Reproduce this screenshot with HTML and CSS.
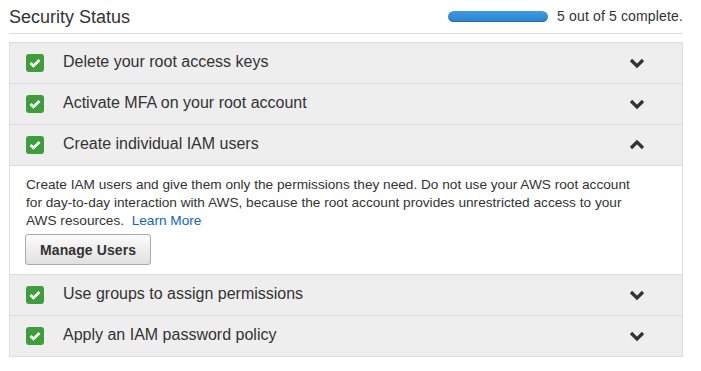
FILE: index.html
```html
<!DOCTYPE html>
<html lang="en">
<head>
    <meta charset="UTF-8">
    <title>Security Status</title>
    <link rel="stylesheet" href="styles.css">
</head>
<body>
    <div class="container">
        <div class="header">
            <h2 class="title">Security Status</h2>
            <div class="progress">
                <div class="bar"><div class="fill" style="width: 100%"></div></div>
                <span class="progress-text">5 out of 5 complete.</span>
            </div>
        </div>
        <div class="panel">
            <div class="row">
                <div class="row-head">
                    <span class="check"><svg width="12" height="10" viewBox="0 0 12 10"><polyline points="1.5,5 4.5,8 10.5,2" fill="none" stroke="#fff" stroke-width="2.6"/></svg></span>
                    <span class="label">Delete your root access keys</span>
                    <svg class="chevron" width="16" height="10" viewBox="0 0 16 10"><polyline points="2,2 8,8 14,2" fill="none" stroke="#333" stroke-width="3.2"/></svg>
                </div>
            </div>
            <div class="row">
                <div class="row-head">
                    <span class="check"><svg width="12" height="10" viewBox="0 0 12 10"><polyline points="1.5,5 4.5,8 10.5,2" fill="none" stroke="#fff" stroke-width="2.6"/></svg></span>
                    <span class="label">Activate MFA on your root account</span>
                    <svg class="chevron" width="16" height="10" viewBox="0 0 16 10"><polyline points="2,2 8,8 14,2" fill="none" stroke="#333" stroke-width="3.2"/></svg>
                </div>
            </div>
            <div class="row open">
                <div class="row-head">
                    <span class="check"><svg width="12" height="10" viewBox="0 0 12 10"><polyline points="1.5,5 4.5,8 10.5,2" fill="none" stroke="#fff" stroke-width="2.6"/></svg></span>
                    <span class="label">Create individual IAM users</span>
                    <svg class="chevron" width="16" height="10" viewBox="0 0 16 10"><polyline points="2,8 8,2 14,8" fill="none" stroke="#333" stroke-width="3.2"/></svg>
                </div>
                <div class="row-body">
                    <p class="desc">Create IAM users and give them only the permissions they need. Do not use your AWS root account for day-to-day interaction with AWS, because the root account provides unrestricted access to your AWS resources.&nbsp; <a href="#" class="link">Learn More</a></p>
                    <button class="button">Manage Users</button>
                </div>
            </div>
            <div class="row">
                <div class="row-head">
                    <span class="check"><svg width="12" height="10" viewBox="0 0 12 10"><polyline points="1.5,5 4.5,8 10.5,2" fill="none" stroke="#fff" stroke-width="2.6"/></svg></span>
                    <span class="label">Use groups to assign permissions</span>
                    <svg class="chevron" width="16" height="10" viewBox="0 0 16 10"><polyline points="2,2 8,8 14,2" fill="none" stroke="#333" stroke-width="3.2"/></svg>
                </div>
            </div>
            <div class="row">
                <div class="row-head">
                    <span class="check"><svg width="12" height="10" viewBox="0 0 12 10"><polyline points="1.5,5 4.5,8 10.5,2" fill="none" stroke="#fff" stroke-width="2.6"/></svg></span>
                    <span class="label">Apply an IAM password policy</span>
                    <svg class="chevron" width="16" height="10" viewBox="0 0 16 10"><polyline points="2,2 8,8 14,2" fill="none" stroke="#333" stroke-width="3.2"/></svg>
                </div>
            </div>
        </div>
    </div>
</body>
</html>
```

FILE: styles.css
```css
body {
    margin: 0;
    background-color: #fff;
    font-family: "Liberation Sans", Arial, sans-serif;
    color: #333;
}
.container {
    width: 674px;
    padding-left: 9px;
}
.header {
    display: flex;
    justify-content: space-between;
    align-items: center;
    height: 33px;
    border-bottom: 1px solid #ddd;
    margin-bottom: 8px;
}
.title {
    margin: 0;
    font-size: 18px;
    font-weight: normal;
    line-height: 22px;
    color: #333;
    padding-top: 1px;
}
.progress {
    display: flex;
    align-items: center;
    gap: 9px;
    padding-bottom: 1px;
}
.bar {
    width: 100px;
    height: 11px;
    border-radius: 6px;
    background-color: #ddd;
    overflow: hidden;
}
.fill {
    height: 100%;
    border-radius: 6px;
    background: linear-gradient(#3d9be0, #2b83cb);
    box-shadow: inset 0 -1px 0 #1f6fae;
}
.progress-text {
    font-size: 14px;
    letter-spacing: 0.15px;
    color: #333;
}
.panel {
    border: 1px solid #ddd;
    border-bottom: none;
}
.row {
    border-bottom: 1px solid #ddd;
}
.row-head {
    display: flex;
    align-items: center;
    height: 40px;
    padding: 0 37px 0 16px;
    background-color: #eee;
}
.row.open .row-head {
    border-bottom: 1px solid #ddd;
}
.check {
    display: flex;
    justify-content: center;
    align-items: center;
    width: 18px;
    height: 18px;
    border-radius: 3px;
    background-color: #3f9d3b;
    margin-right: 19px;
}
.label {
    flex: 1;
    font-size: 16px;
    color: #333;
    padding-bottom: 2px;
}
.row-body {
    background-color: #fff;
    padding: 9px 35px 9px 16px;
}
.desc {
    margin: 0 0 5px;
    font-size: 13.65px;
    line-height: 18px;
    padding-top: 1px;
}
.link {
    color: #1166bb;
    text-decoration: none;
}
.button {
    height: 31px;
    padding: 0 14px;
    margin-top: -1px;
    margin-left: -1px;
    font-family: "Liberation Sans", Arial, sans-serif;
    font-size: 14px;
    font-weight: bold;
    letter-spacing: 0.1px;
    color: #333;
    background: linear-gradient(#fbfbfb, #e1e1e1);
    border: 1px solid #aaa;
    border-radius: 3px;
    cursor: pointer;
}
```
